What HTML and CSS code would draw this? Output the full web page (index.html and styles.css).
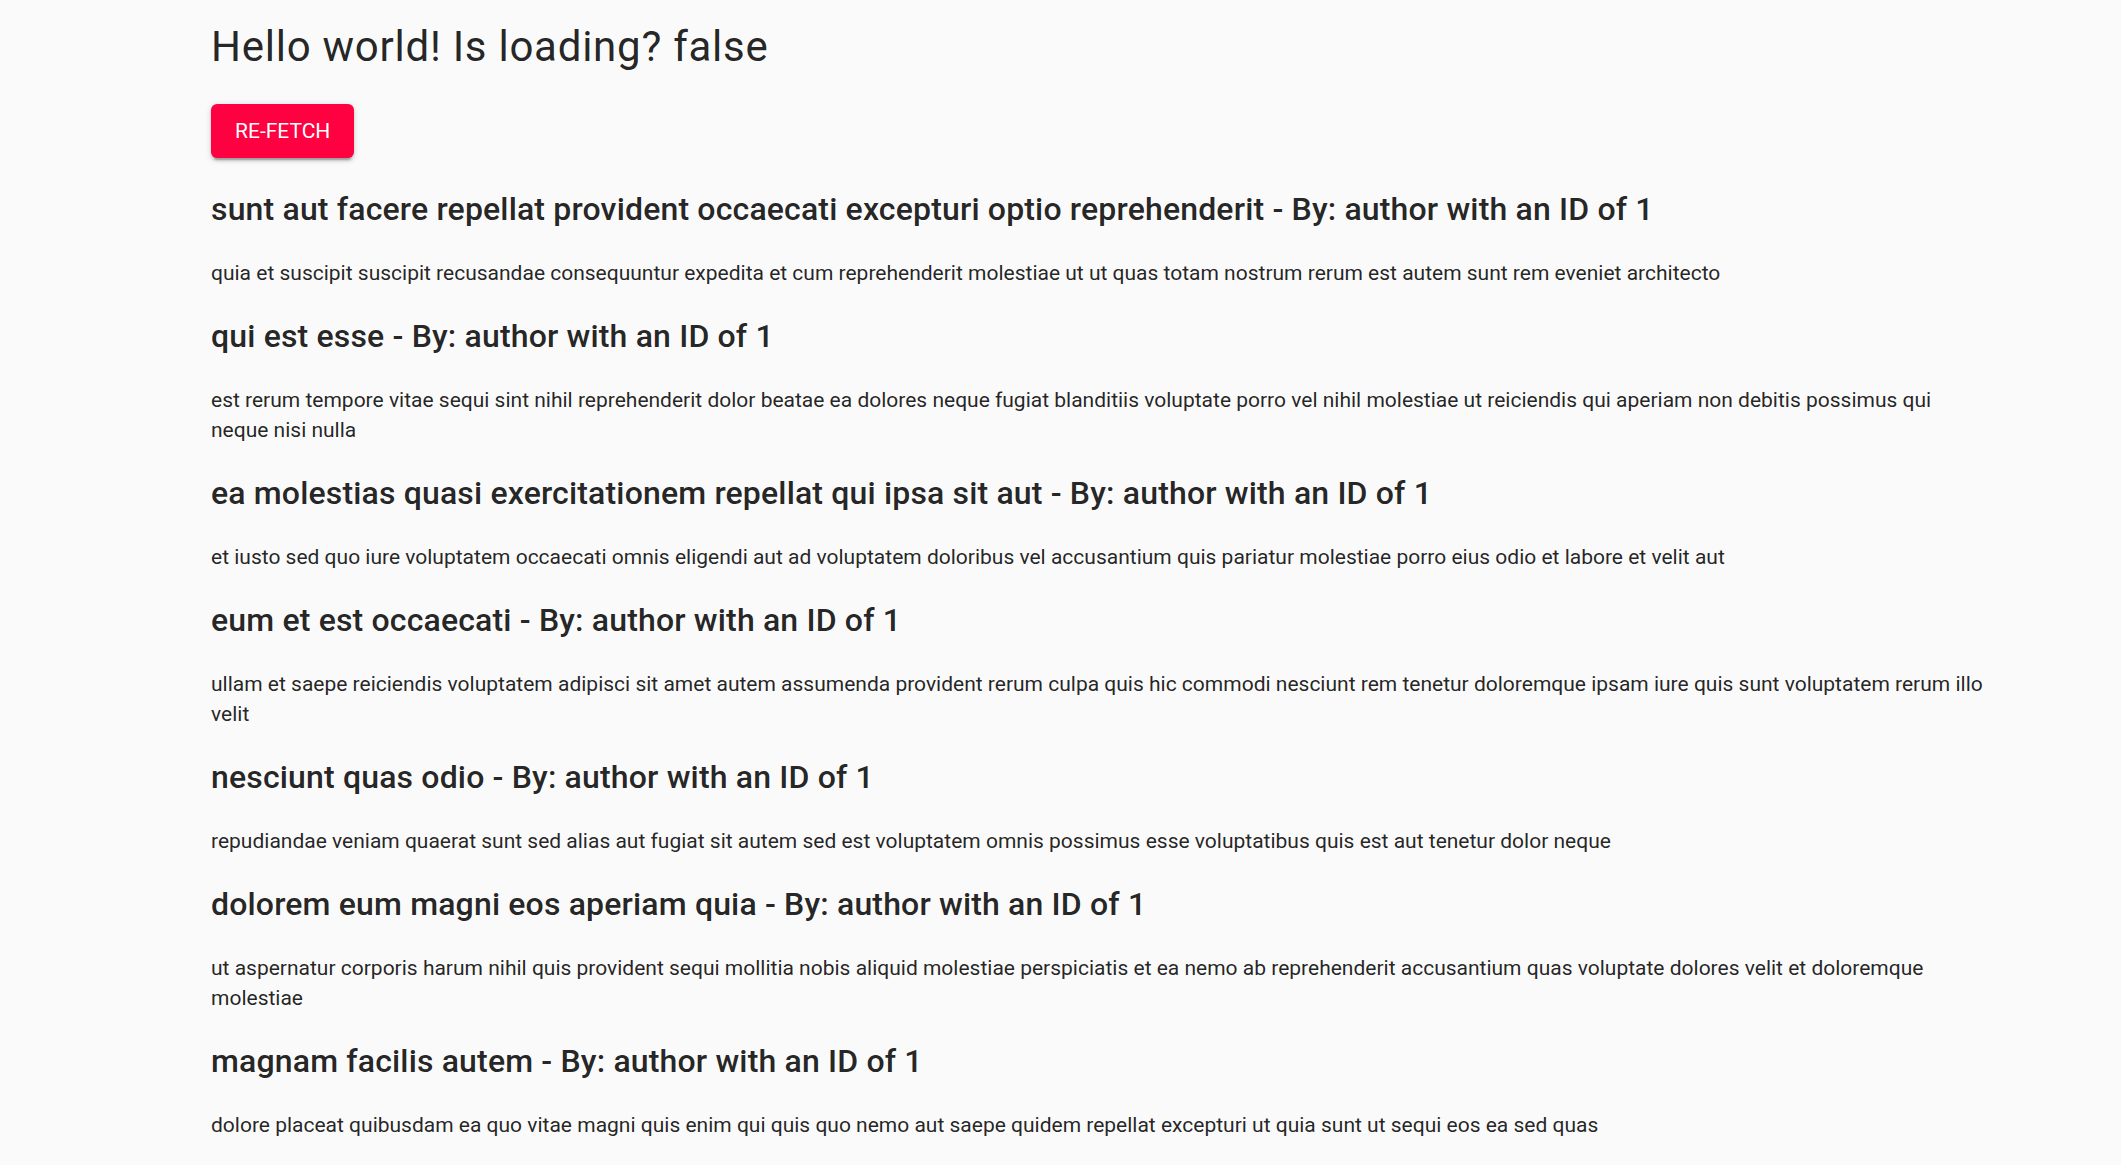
FILE: index.html
```html
<!DOCTYPE html>
<html lang="en">
<head>
<meta charset="utf-8">
<title>Posts</title>
<link rel="stylesheet" href="styles.css">
</head>
<body>
<main class="container">
  <h1 class="title">Hello world! Is loading? false</h1>
  <button class="btn" type="button">RE-FETCH</button>
  <section class="posts">
    <article class="post">
      <h2 class="post-title">sunt aut facere repellat provident occaecati excepturi optio reprehenderit - By: author with an ID of 1</h2>
      <p class="post-body">quia et suscipit suscipit recusandae consequuntur expedita et cum reprehenderit molestiae ut ut quas totam nostrum rerum est autem sunt rem eveniet architecto</p>
    </article>
    <article class="post">
      <h2 class="post-title">qui est esse - By: author with an ID of 1</h2>
      <p class="post-body">est rerum tempore vitae sequi sint nihil reprehenderit dolor beatae ea dolores neque fugiat blanditiis voluptate porro vel nihil molestiae ut reiciendis qui aperiam non debitis possimus qui neque nisi nulla</p>
    </article>
    <article class="post">
      <h2 class="post-title">ea molestias quasi exercitationem repellat qui ipsa sit aut - By: author with an ID of 1</h2>
      <p class="post-body">et iusto sed quo iure voluptatem occaecati omnis eligendi aut ad voluptatem doloribus vel accusantium quis pariatur molestiae porro eius odio et labore et velit aut</p>
    </article>
    <article class="post">
      <h2 class="post-title">eum et est occaecati - By: author with an ID of 1</h2>
      <p class="post-body">ullam et saepe reiciendis voluptatem adipisci sit amet autem assumenda provident rerum culpa quis hic commodi nesciunt rem tenetur doloremque ipsam iure quis sunt voluptatem rerum illo velit</p>
    </article>
    <article class="post">
      <h2 class="post-title">nesciunt quas odio - By: author with an ID of 1</h2>
      <p class="post-body">repudiandae veniam quaerat sunt sed alias aut fugiat sit autem sed est voluptatem omnis possimus esse voluptatibus quis est aut tenetur dolor neque</p>
    </article>
    <article class="post">
      <h2 class="post-title">dolorem eum magni eos aperiam quia - By: author with an ID of 1</h2>
      <p class="post-body">ut aspernatur corporis harum nihil quis provident sequi mollitia nobis aliquid molestiae perspiciatis et ea nemo ab reprehenderit accusantium quas voluptate dolores velit et doloremque molestiae</p>
    </article>
    <article class="post">
      <h2 class="post-title">magnam facilis autem - By: author with an ID of 1</h2>
      <p class="post-body">dolore placeat quibusdam ea quo vitae magni quis enim qui quis quo nemo aut saepe quidem repellat excepturi ut quia sunt ut sequi eos ea sed quas</p>
    </article>
  </section>
</main>
</body>
</html>
```
FILE: styles.css
```css
html, body {
  margin: 0;
  padding: 0;
  background: #fafafa;
}

body {
  font-family: Roboto, "Liberation Sans", Arial, sans-serif;
  color: rgba(0, 0, 0, 0.87);
}

.container {
  box-sizing: border-box;
  width: 1986px;
  padding: 23px 0 0 211px;
  display: flex;
  flex-direction: column;
  align-items: flex-start;
}

.title {
  margin: 0;
  font-size: 42px;
  line-height: 48px;
  font-weight: 400;
  letter-spacing: 0.75px;
}

.btn {
  margin-top: 33px;
  height: 54px;
  padding: 0 24px;
  border: 0;
  border-radius: 6px;
  background: #ff0040;
  color: #fff;
  font-family: Roboto, "Liberation Sans", Arial, sans-serif;
  font-size: 21px;
  font-weight: 400;
  letter-spacing: 0;
  text-transform: uppercase;
  box-shadow: 0 4.5px 1.5px -3px rgba(0,0,0,0.2), 0 3px 3px 0 rgba(0,0,0,0.14), 0 1.5px 7.5px 0 rgba(0,0,0,0.12);
  cursor: pointer;
}

.posts {
  margin-top: 27px;
  display: flex;
  flex-direction: column;
  align-self: stretch;
}

.post-title {
  margin: 0 0 25px;
  font-size: 32px;
  line-height: 48px;
  font-weight: 500;
  letter-spacing: 0.16px;
}

.post-body {
  margin: 0 0 24px;
  font-size: 21px;
  line-height: 30px;
  font-weight: 400;
}
```
